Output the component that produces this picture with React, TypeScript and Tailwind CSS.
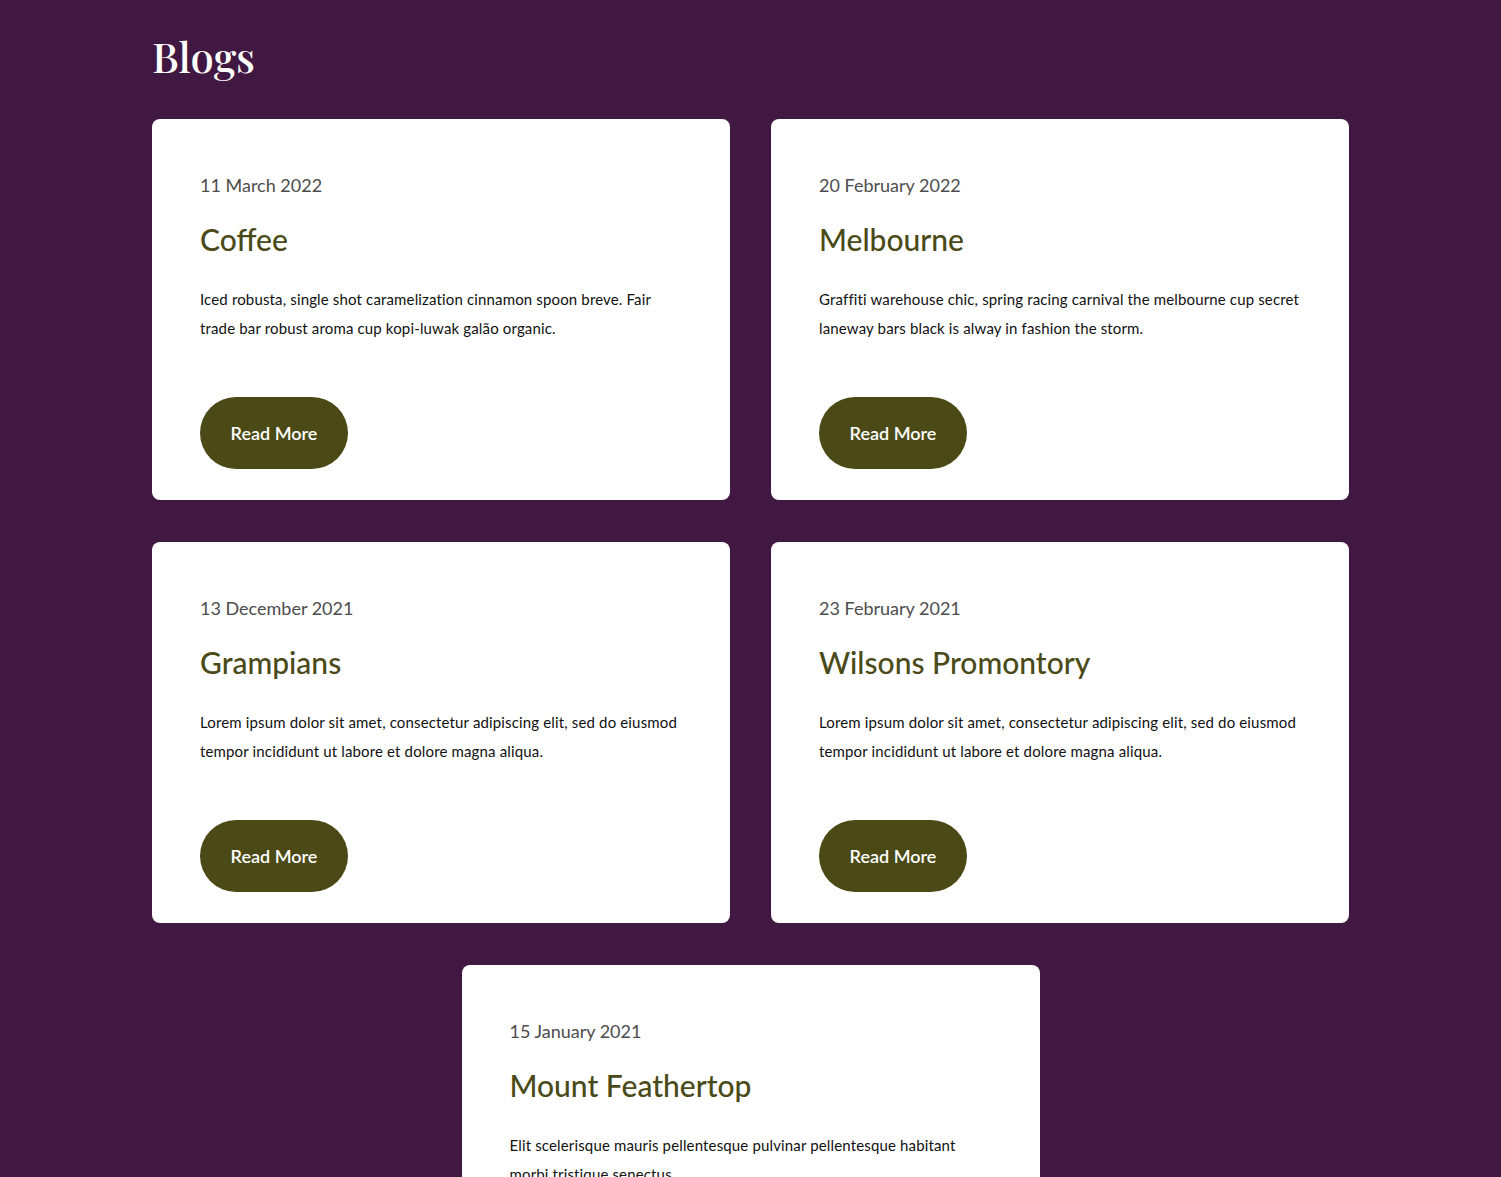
import React from "react";

const posts = [
  {
    date: "11 March 2022",
    title: "Coffee",
    body: "Iced robusta, single shot caramelization cinnamon spoon breve. Fair trade bar robust aroma cup kopi-luwak galão organic.",
  },
  {
    date: "20 February 2022",
    title: "Melbourne",
    body: "Graffiti warehouse chic, spring racing carnival the melbourne cup secret laneway bars black is alway in fashion the storm.",
  },
  {
    date: "13 December 2021",
    title: "Grampians",
    body: "Lorem ipsum dolor sit amet, consectetur adipiscing elit, sed do eiusmod tempor incididunt ut labore et dolore magna aliqua.",
  },
  {
    date: "23 February 2021",
    title: "Wilsons Promontory",
    body: "Lorem ipsum dolor sit amet, consectetur adipiscing elit, sed do eiusmod tempor incididunt ut labore et dolore magna aliqua.",
  },
  {
    date: "15 January 2021",
    title: "Mount Feathertop",
    body: "Elit scelerisque mauris pellentesque pulvinar pellentesque habitant morbi tristique senectus.",
  },
];

function Card({ p }: { p: (typeof posts)[number] }) {
  return (
    <div className="w-[578px] bg-white rounded-[8px] px-[48px] pt-[52px] pb-[31px] flex flex-col items-start">
      <div className="text-[18px] leading-[28px] text-[#4d4d4d]">{p.date}</div>
      <h2 className="mt-[22px] text-[30px] leading-[36px] text-[#4a4a18] font-medium">{p.title}</h2>
      <p className="mt-[28px] text-[15px] leading-[29px] tracking-[0.15px] text-[#111]">{p.body}</p>
      <button className="mt-[54px] h-[72px] w-[148px] rounded-full bg-[#4b4a17] text-white text-[18px] font-semibold">
        Read More
      </button>
    </div>
  );
}

export default function App() {
  return (
    <div
      className="min-h-[1177px] bg-[#411841] pb-[60px]"
      style={{ fontFamily: "'Source Sans Pro', Lato, 'Noto Sans', sans-serif" }}
    >
      <div className="w-[1197px] mx-auto">
        <h1
          className="pt-[26px] text-[42px] leading-[60px] text-white font-medium"
          style={{ fontFamily: "'Playfair Display', 'Liberation Serif', serif" }}
        >
          Blogs
        </h1>
        <div className="mt-[33px] flex flex-wrap justify-center gap-x-[41px] gap-y-[42px]">
          {posts.map((p) => (
            <Card key={p.title} p={p} />
          ))}
        </div>
      </div>
    </div>
  );
}
